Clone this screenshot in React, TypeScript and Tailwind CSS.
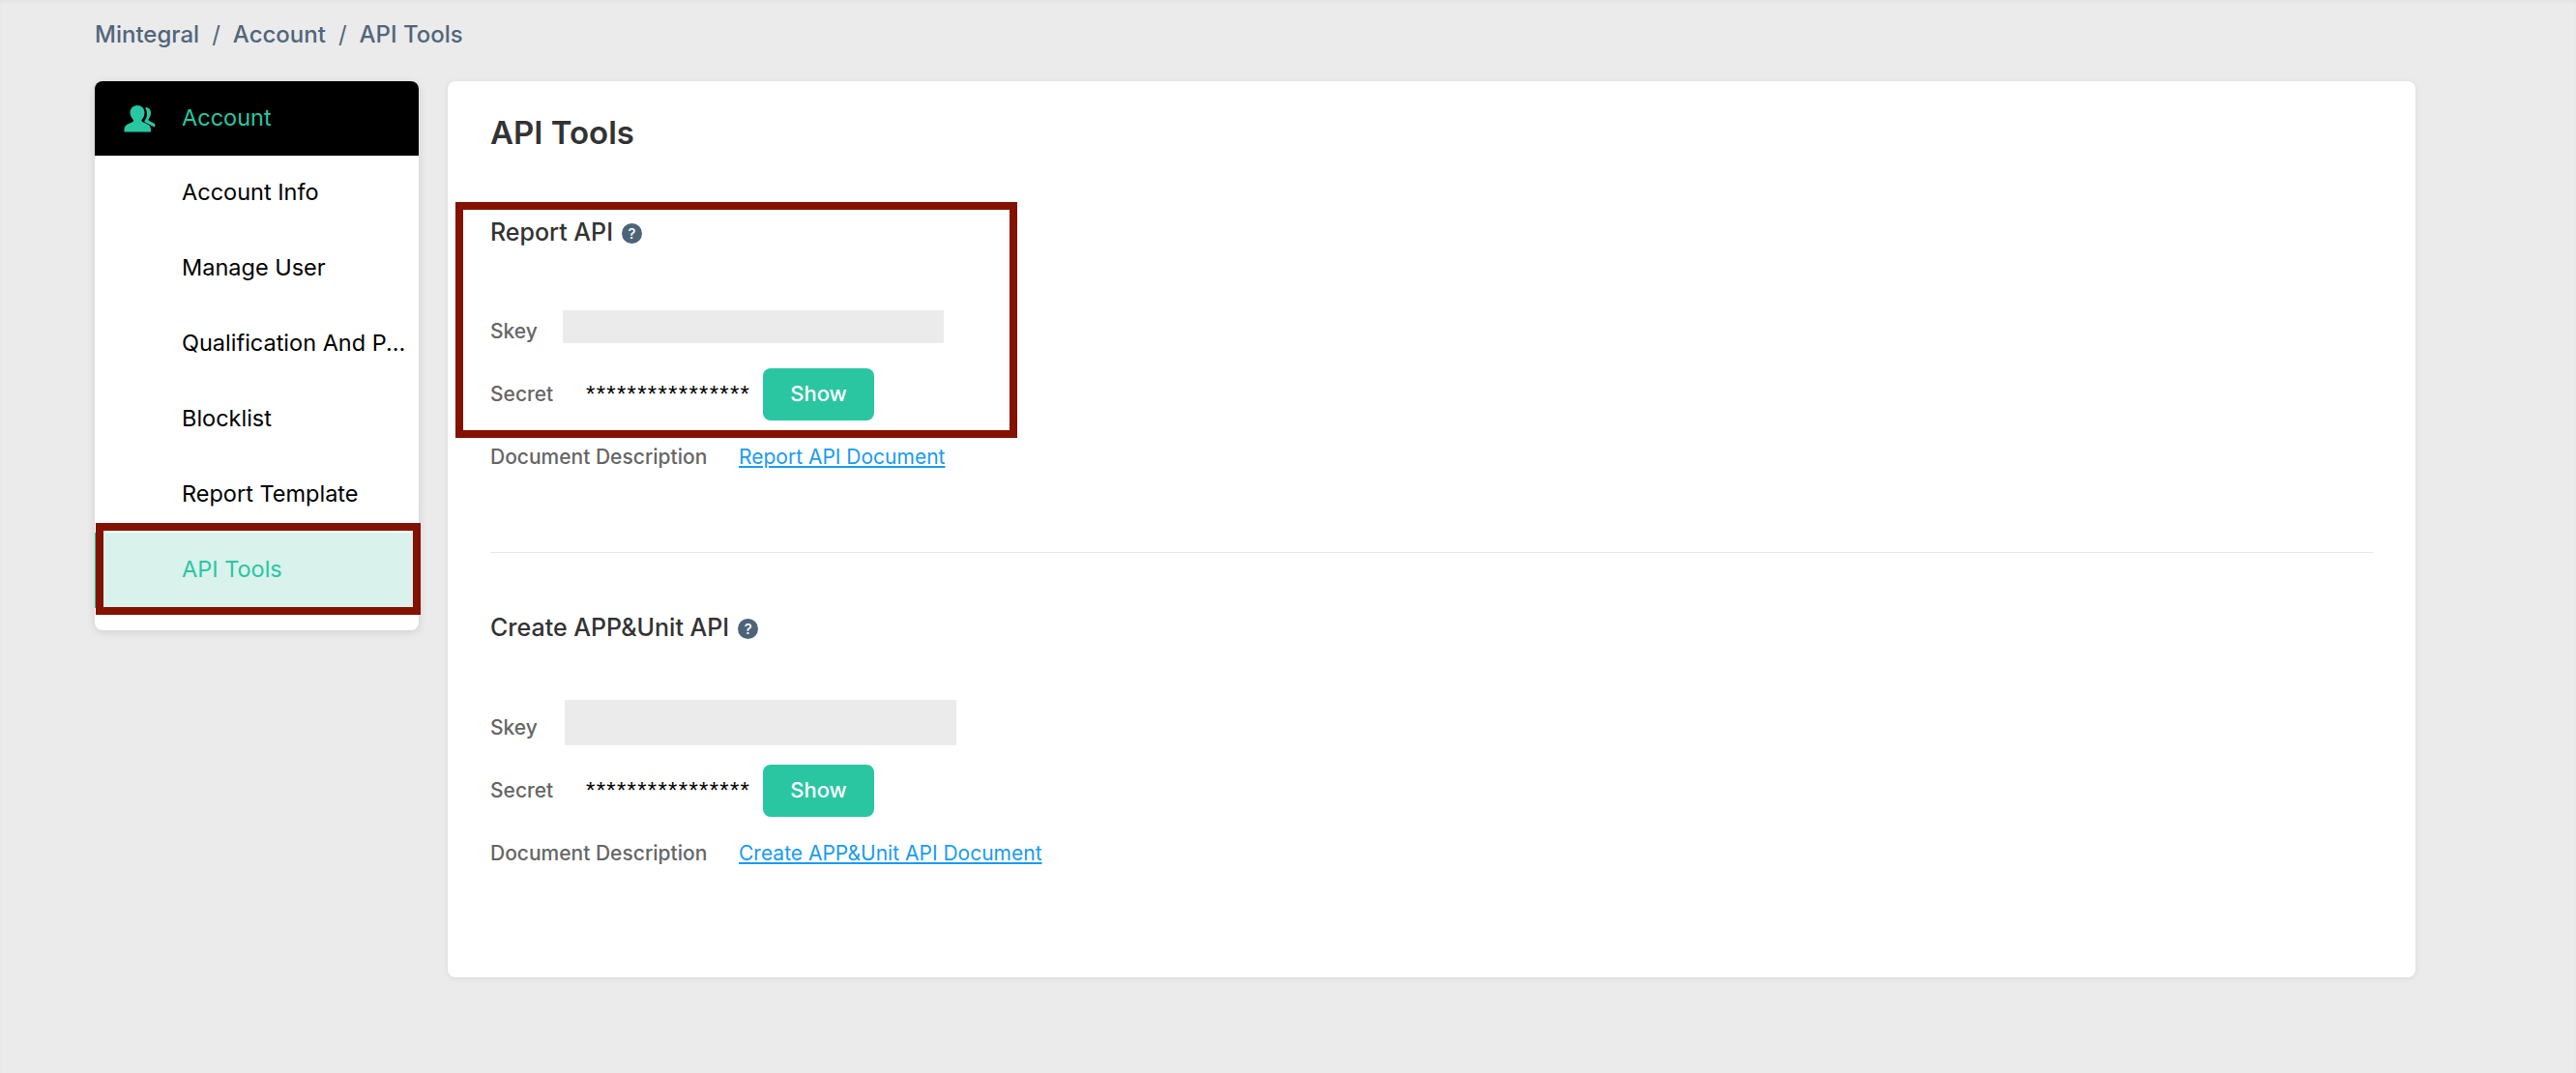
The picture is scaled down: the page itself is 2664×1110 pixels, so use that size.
const menuItems = ['Account Info', 'Manage User', 'Qualification And P...', 'Blocklist', 'Report Template'];

function AccountIcon() {
  return (
    <svg width="33" height="28" viewBox="0 0 33 28" className="shrink-0" fill="#29c6a2">
      <path d="M14 0c4.200 0 7.500 3 7.500 7.500 0 3-1.200 5.500-2.700 7.200-.6.700-.4 1.800.4 2.200l5.300 2.600c2.300 1.100 3.500 3 3.500 5.500v2.500H.5V25c0-2.500 1.200-4.400 3.500-5.500l5.300-2.600c.8-.4 1-1.500.4-2.200C8.200 13 6.500 10.500 6.500 7.500 6.500 3 9.800 0 14 0z" />
      <path d="M22.500 2c3.300 0 5.500 2.500 5.500 6 0 2.400-1 4.500-2.200 6-.5.600-.3 1.500.4 1.900l6 3.200.3 2.400-1 1-6.500-3.500-3-1.500c-.6-.4-.8-1.300-.3-1.900 1.400-1.700 2.300-4.200 2.300-6.800 0-2.300-.5-4.200-1.700-5.800.5-.3 1-.4.200-.4z" />
    </svg>
  );
}

function HelpIcon() {
  return (
    <span className="ml-[9px] flex h-[21px] w-[21px] items-center justify-center rounded-full bg-[#4d6478] text-[15px] font-medium leading-none text-white">
      ?
    </span>
  );
}

type ApiSectionProps = {
  title: string;
  docLabel: string;
  skeyLabelClass: string;
  skeyClass: string;
  secretClass: string;
};

function ApiSection({ title, docLabel, skeyLabelClass, skeyClass, secretClass }: ApiSectionProps) {
  return (
    <>
      <div className="flex h-10 items-center text-[25px] font-medium text-[#333]">
        {title}
        <HelpIcon />
      </div>
      <div className={`flex items-center text-[21px] font-medium text-[#666] ${skeyClass}`}>
        <span className={`mt-[10px] ${skeyLabelClass}`}>Skey</span>
        <div className="h-full flex-1 bg-[#ebebeb]" />
      </div>
      <div className={`flex h-[54px] items-center text-[21px] font-medium text-[#666] ${secretClass}`}>
        <span className="w-[99px]">Secret</span>
        <span className="w-[183px] font-['Liberation_Sans',Arial,sans-serif] text-[24px] font-normal tracking-[1.3px] text-black">
          ****************
        </span>
        <button className="h-[54px] w-[115px] rounded-[8px] bg-[#2ac6a2] pb-[2px] text-[22px] font-medium text-white">Show</button>
      </div>
      <div className="mt-[19px] flex h-[38px] items-center whitespace-nowrap text-[21px] font-medium text-[#666]">
        <span className="w-[257px]">Document Description</span>
        <a className="font-normal text-[#1a9bf0] underline">{docLabel}</a>
      </div>
    </>
  );
}

export default function App() {
  return (
    <div className="relative min-h-[1110px] bg-[#ebebeb] px-[98px] font-['Inter',sans-serif] shadow-[inset_0_2px_3px_rgba(0,0,0,0.03)]">
      <div className="flex h-[84px] items-start pt-[16px] text-[24px] font-medium leading-[40px] text-[#50667b]">
        <span>Mintegral</span>
        <span className="mx-[13px] font-normal">/</span>
        <span>Account</span>
        <span className="mx-[13px] font-normal">/</span>
        <span>API Tools</span>
      </div>

      <div className="flex items-start gap-[30px]">
        {/* Sidebar */}
        <aside className="h-[568px] w-[335px] shrink-0 overflow-hidden rounded-[8px] bg-white pb-[23px] text-[23.5px] shadow-[0_2px_10px_rgba(0,0,0,0.12)]">
          <div className="flex h-[77px] items-center bg-black pl-[30px] text-[#29c6a2]">
            <AccountIcon />
            <span className="mb-[2px] ml-[27px]">Account</span>
          </div>
          {menuItems.map((item) => (
            <div key={item} className="flex h-[78px] items-center whitespace-nowrap pb-[2px] pl-[90px] text-black">
              {item}
            </div>
          ))}
          <div className="flex h-[78px] items-center border-l-[3px] border-[#29c6a2] bg-[#daf2ec] pb-[2px] pl-[87px] text-[#29c6a2]">
            API Tools
          </div>
        </aside>

        {/* Main card */}
        <main className="h-[927px] w-[2035px] shrink-0 rounded-[8px] bg-white px-[44px] pt-[31px] shadow-[0_1px_6px_rgba(0,0,0,0.08)]">
          <h1 className="h-[44px] text-[33px] font-semibold leading-[44px] text-[#333]">API Tools</h1>
          <div className="mt-[62px]">
            <ApiSection
              title="Report API"
              docLabel="Report API Document"
              skeyLabelClass="w-[75px]"
              skeyClass="mt-[60px] h-[34px] w-[469px]"
              secretClass="mt-[26px]"
            />
          </div>
          <div className="mt-[79px] h-px bg-[#e8e8e8]" />
          <div className="mt-[58px]">
            <ApiSection
              title="Create APP&Unit API"
              docLabel="Create APP&Unit API Document"
              skeyLabelClass="w-[77px]"
              skeyClass="mt-[54px] h-[47px] w-[482px]"
              secretClass="mt-[20px]"
            />
          </div>
        </main>
      </div>

      {/* Red annotation boxes */}
      <div className="absolute left-[99px] top-[541px] h-[95px] w-[336px] border-[8px] border-[#841200]" />
      <div className="absolute left-[471px] top-[209px] h-[244px] w-[581px] border-[8px] border-[#841200]" />
    </div>
  );
}
